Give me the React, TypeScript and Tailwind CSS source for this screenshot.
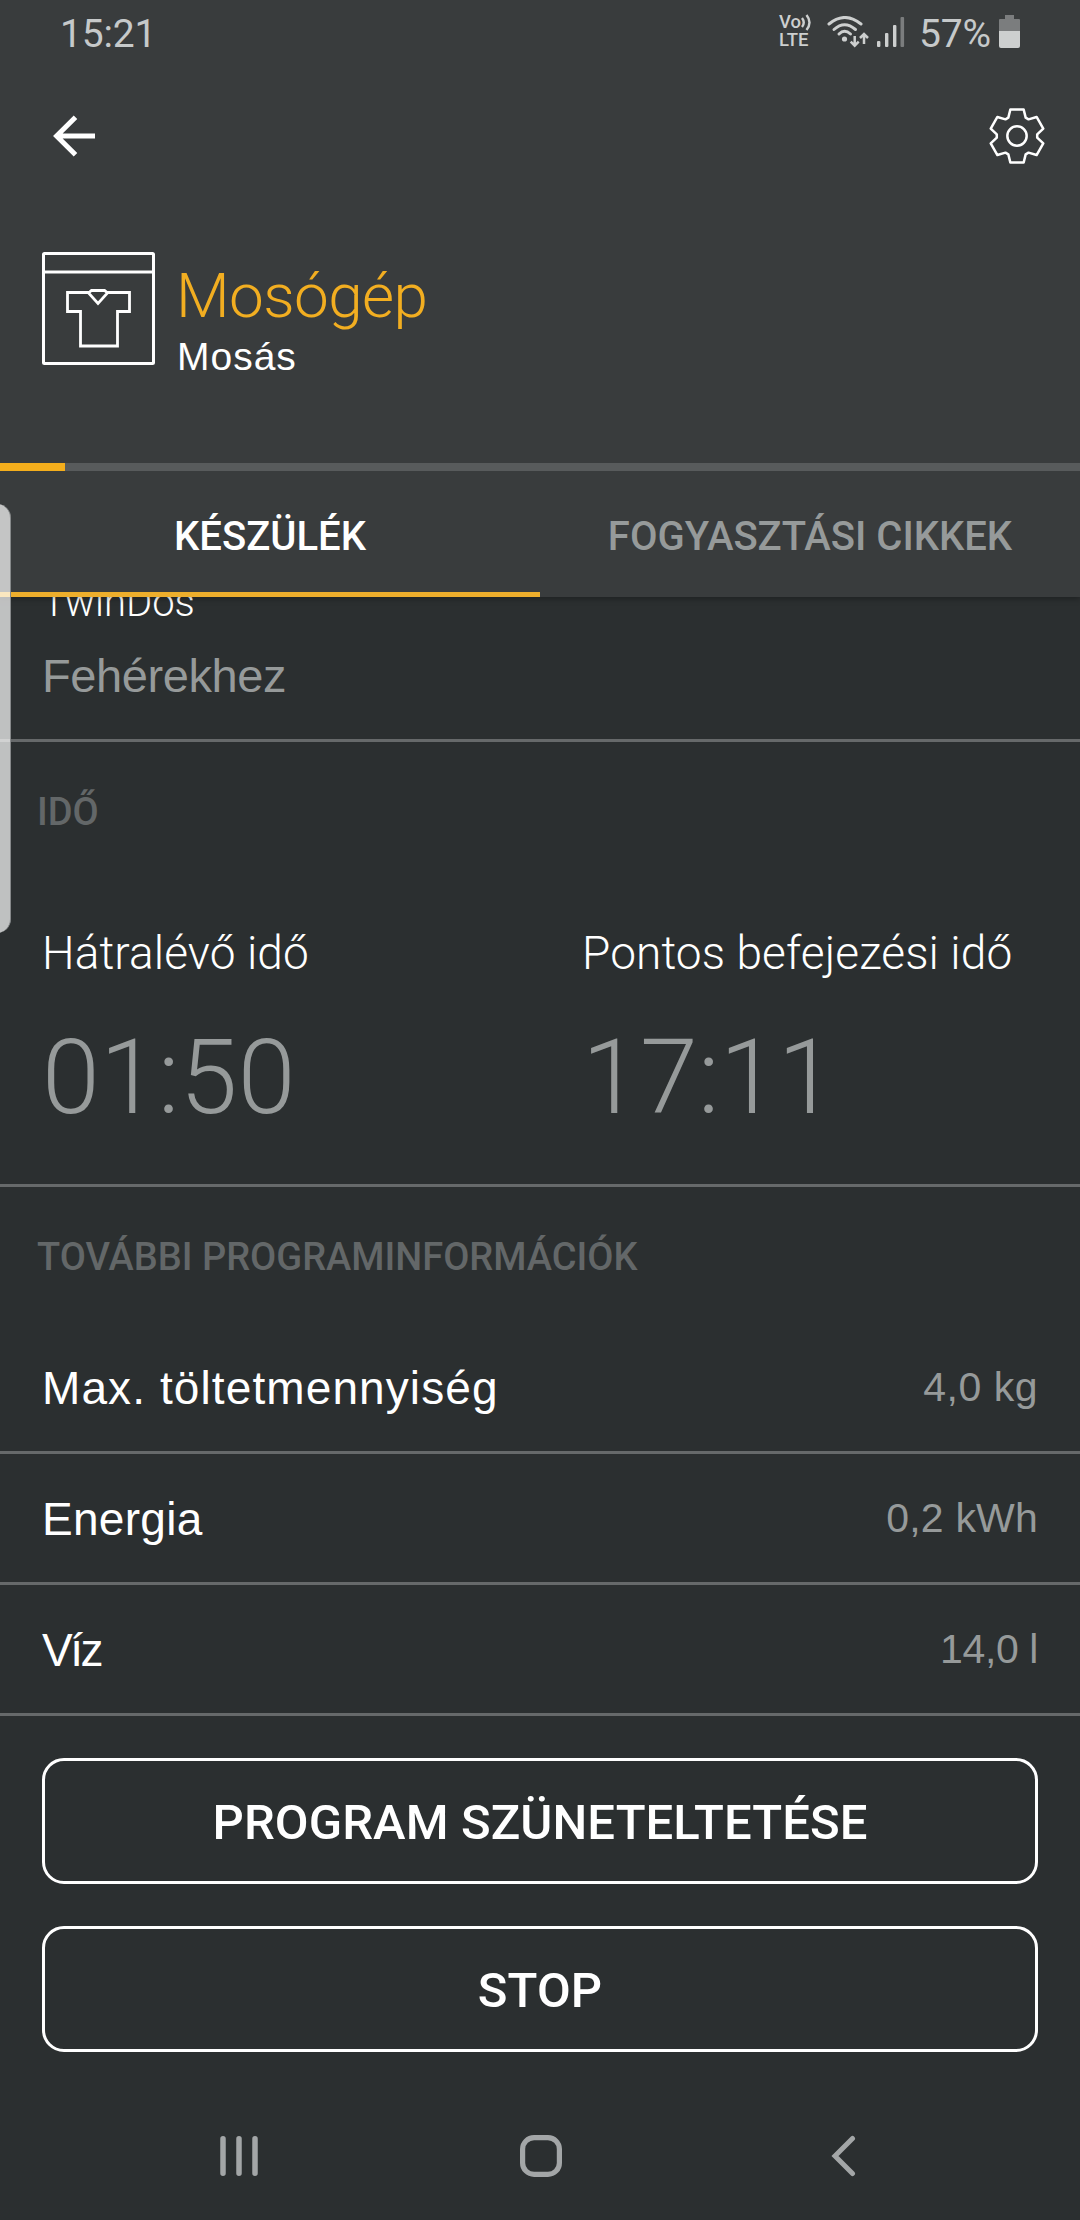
type InfoRow = {
  label: string;
  value: string;
  labelClass: string;
  valueClass: string;
};

const infoRows: InfoRow[] = [
  {
    label: "Max. töltetmennyiség",
    value: "4,0 kg",
    labelClass: "tracking-[1.1px]",
    valueClass: "tracking-[0.5px]"
  },
  {
    label: "Energia",
    value: "0,2 kWh",
    labelClass: "tracking-[0.3px]",
    valueClass: "tracking-[0.2px]"
  },
  {
    label: "Víz",
    value: "14,0 l",
    labelClass: "tracking-[-2.5px]",
    valueClass: "tracking-[-0.4px]"
  }
];

const progress = 6;

// one gear tooth, repeated six times around the centre
const toothPoints = [
  [-26, -55],
  [-20, -79.5],
  [20, -79.5],
  [26, -55]
];

function gearPoints() {
  return [0, 1, 2, 3, 4, 5]
    .flatMap((step) => {
      const angle = (step * Math.PI) / 3;
      return toothPoints.map(([x, y]) => {
        const px = x * Math.cos(angle) - y * Math.sin(angle);
        const py = x * Math.sin(angle) + y * Math.cos(angle);
        return `${px.toFixed(1)},${py.toFixed(1)}`;
      });
    })
    .join(" ");
}

function GearIcon() {
  return (
    <svg className="h-[58px] w-[58px]" viewBox="-87 -87 174 174" fill="none" stroke="white" strokeWidth="7.5">
      <polygon points={gearPoints()} strokeLinejoin="round" />
      <circle r="29" />
    </svg>
  );
}

function BackArrowIcon() {
  return (
    <svg className="h-[42px] w-[42px]" viewBox="0 0 42 42" fill="none" stroke="white" strokeWidth="5">
      <path d="M42 21H5M22.5 2.2 3.6 21l18.9 18.8" />
    </svg>
  );
}

function WasherIcon() {
  return (
    <svg className="h-[113px] w-[113px]" viewBox="0 0 113 113" fill="none" stroke="white" strokeWidth="3">
      <rect x="1.5" y="1.5" width="110" height="110" rx="1" />
      <path d="M2 20h109" />
      <path
        d="M48 40.5H25.5v19h13V94h37V59.5h12v-19H65M46.5 41l3-2.5h13l3 2.5L56 51.5z"
        strokeWidth="2.8"
      />
    </svg>
  );
}

function VolteIcon() {
  return (
    <p className="relative w-[33px] text-[18.5px] leading-[17.5px] font-medium text-[#cdcfcf]">
      Vo
      <br />
      LTE
      <svg
        className="absolute top-0 left-[22px] h-[17px] w-[12px]"
        viewBox="0 0 12 17"
        fill="none"
        stroke="currentColor"
        strokeWidth="2.4"
      >
        <path d="M1 4q3.500 4.500 0 9M5.500 1q6 7.500 0 15" />
      </svg>
    </p>
  );
}

function WifiIcon() {
  return (
    <svg className="h-[32px] w-[42px]" viewBox="0 0 42 32" fill="none" stroke="#cdcfcf">
      <g strokeWidth="3" strokeLinecap="round">
        <path d="M2 8Q17.500-5 34 8" />
        <path d="M7 13.500Q17.500 4 28.500 13.500" />
        <path d="M12 18Q17.500 12.500 23.500 18" />
      </g>
      <circle cx="17.500" cy="23" r="2.600" fill="#cdcfcf" stroke="none" />
      <path
        d="M27.700 20v9.500M23.700 25.700l4 4 4-4M37 28V18M33 22l4-4 4 4"
        strokeWidth="2.500"
      />
    </svg>
  );
}

function SignalIcon() {
  return (
    <svg className="h-[32px] w-[28px]" viewBox="0 0 28 32" fill="#cdcfcf">
      <rect x="0" y="25" width="3.400" height="6" rx="1" />
      <rect x="8" y="17" width="3.400" height="14" rx="1" />
      <rect x="16" y="9" width="3.400" height="22" rx="1" />
      <rect x="23.500" y="1" width="3.600" height="30" rx="1" fill="#7b7d7e" />
    </svg>
  );
}

function BatteryIcon() {
  return (
    <svg className="h-[33px] w-[21px]" viewBox="0 0 21 33">
      <path d="M6 0h9v4h5q1 0 1 1v11H0V5q0-1 1-1h5z" fill="#7b7d7e" />
      <path d="M0 16h21v15q0 2-2 2H2q-2 0-2-2z" fill="#cdcfcf" />
    </svg>
  );
}

function StatusBar() {
  return (
    <div className="flex h-[67px] items-center justify-between pr-[60px] pl-[60px] text-[39px] text-[#c6c9ca]">
      <span className="pt-[2px] tracking-[-0.2px]">15:21</span>
      <div className="flex h-[36px] items-center pb-1">
        <VolteIcon />
        <div className="ml-[15px]">
          <WifiIcon />
        </div>
        <div className="ml-[8px]">
          <SignalIcon />
        </div>
        <span className="mt-[6px] ml-[14px] w-[72px] tracking-[-0.2px]">57%</span>
        <div className="ml-[8px]">
          <BatteryIcon />
        </div>
      </div>
    </div>
  );
}

function Header() {
  return (
    <header className="relative z-10 bg-[#393c3d] shadow-[0_2px_6px_rgba(0,0,0,0.3)]">
      <StatusBar />
      <div className="flex h-[138px] items-center justify-between pr-[34px] pl-[53px]">
        <BackArrowIcon />
        <GearIcon />
      </div>
      <div className="flex h-[258px] items-start pt-[47px] pl-[42px]">
        <WasherIcon />
        <div className="ml-[21px] pt-[13px]">
          <h1 className="text-[62px] leading-[62px] font-light tracking-[-0.6px] text-[#f2ae21]">Mosógép</h1>
          <p className="mt-[10px] pl-[1px] font-['Liberation_Sans',sans-serif] text-[39px] leading-[40px] tracking-[1px] text-white">
            Mosás
          </p>
        </div>
      </div>
      <div className="h-2 bg-[#585b5c]">
        <div className="h-full bg-[#f4ae1c]" style={{ width: `${progress}%` }} />
      </div>
      <nav className="grid h-[126px] grid-cols-2 text-[40px] font-medium">
        <button className="border-b-[5px] border-[#edae2c] pt-[11px] text-white">KÉSZÜLÉK</button>
        <button className="border-b-[5px] border-transparent pt-[11px] text-[#969a9a]">
          FOGYASZTÁSI CIKKEK
        </button>
      </nav>
    </header>
  );
}

function SectionTitle({ children }: { children: string }) {
  return (
    <h2 className="pl-[37px] text-[38px] leading-[44px] font-medium text-[#636768]">{children}</h2>
  );
}

function TimeCell({ label, time }: { label: string; time: string }) {
  return (
    <div className="pl-[42px]">
      <p className="text-[46px] leading-[54px] font-light tracking-[0.1px] text-white">{label}</p>
      <p className="mt-[46px] text-[104px] leading-[104px] font-light tracking-[0.2px] text-[#969a9a]">{time}</p>
    </div>
  );
}

function ActionButton({ children }: { children: string }) {
  return (
    <button className="h-[126px] rounded-[22px] border-[3px] border-white pt-[4px] text-[49px] font-medium tracking-[0.1px] text-white">
      {children}
    </button>
  );
}

function NavigationBar() {
  return (
    <div className="mt-[83px] flex h-[42px] items-center text-[#a3a6a7]">
      <svg
        className="ml-[219px] h-[42px] w-[40px]"
        viewBox="0 0 40 42"
        fill="none"
        stroke="currentColor"
        strokeWidth="5.500"
        strokeLinecap="round"
      >
        <path d="M4 3.700v34.600M20 3.700v34.600M36 3.700v34.600" />
      </svg>
      <svg className="ml-[261px] h-[42px] w-[42px]" viewBox="0 0 42 42" fill="none" stroke="currentColor" strokeWidth="5.200">
        <rect x="2.600" y="2.600" width="36.800" height="36.800" rx="11.500" />
      </svg>
      <svg
        className="ml-[269px] h-[42px] w-[26px]"
        viewBox="0 0 26 42"
        fill="none"
        stroke="currentColor"
        strokeWidth="5"
        strokeLinecap="round"
      >
        <path d="M21.500 3.500 4 21l17.500 17.500" />
      </svg>
    </div>
  );
}

export default function App() {
  return (
    <div className="relative h-[2220px] w-[1080px] overflow-hidden bg-[#2b2f30] font-[Roboto,sans-serif]">
      <Header />

      <main>
        <section className="flow-root h-[145px] border-b-[3px] border-[#66696a] pl-[42px]">
          <p className="-mt-[14px] text-[40px] leading-[40px] font-light text-white">TwinDos</p>
          <p className="mt-[28px] font-['Liberation_Sans',sans-serif] text-[47px] leading-[50px] tracking-[-0.4px] text-[#969a9a]">
            Fehérekhez
          </p>
        </section>

        <section className="h-[445px] border-b-[3px] border-[#66696a] pt-[48px]">
          <SectionTitle>IDŐ</SectionTitle>
          <div className="mt-[92px] grid grid-cols-2">
            <TimeCell label="Hátralévő idő" time="01:50" />
            <TimeCell label="Pontos befejezési idő" time="17:11" />
          </div>
        </section>

        <section className="pt-[48px]">
          <SectionTitle>TOVÁBBI PROGRAMINFORMÁCIÓK</SectionTitle>
          <div className="mt-[44px] font-['Liberation_Sans',sans-serif]">
            {infoRows.map((row) => (
              <div
                key={row.label}
                className="flex h-[131px] items-center justify-between border-b-[3px] border-[#66696a] px-[42px] pt-[2px]"
              >
                <span className={`text-[46px] text-white ${row.labelClass}`}>{row.label}</span>
                <span className={`text-[41px] text-[#969a9a] ${row.valueClass}`}>{row.value}</span>
              </div>
            ))}
          </div>
        </section>

        <div className="grid gap-[42px] px-[42px] pt-[42px]">
          <ActionButton>PROGRAM SZÜNETELTETÉSE</ActionButton>
          <ActionButton>STOP</ActionButton>
        </div>
      </main>

      <NavigationBar />

      {/* edge panel handle over the left side of the screen */}
      <div className="absolute top-[504px] -left-[10px] z-20 h-[429px] w-[21px] rounded-r-[14px] border-r border-[#86898a] bg-white/70" />
    </div>
  );
}
